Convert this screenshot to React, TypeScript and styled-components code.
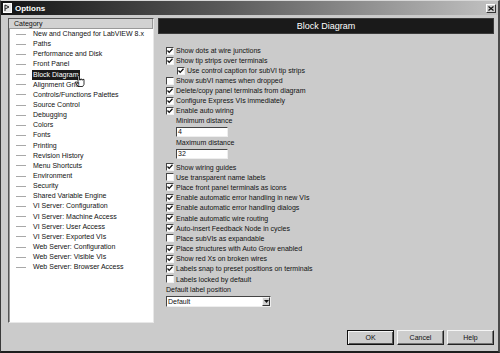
import React from 'react';
import styled, { createGlobalStyle } from 'styled-components';

const Global = createGlobalStyle`
  html, body { margin: 0; padding: 0; background: #cbcbcb; }
  body { font-family: "Liberation Sans", Arial, sans-serif; }
  * { box-sizing: border-box; }
`;

const Window = styled.div`
  width: 500px;
  height: 353px;
  background: #cbcbcb;
  border-top: 1px solid #d8d8d8;
  border-left: 1px solid #3a3a3a;
  border-right: 2px solid #4a4a4a;
  border-bottom: 2px solid #1e1e1e;
  display: flex;
  flex-direction: column;
  overflow: hidden;
`;

const TitleBar = styled.div`
  height: 14px;
  background: linear-gradient(to right, #141414 0%, #5a5a5a 45%, #c2c2c2 100%);
  display: flex;
  align-items: center;
  padding: 0 2px 0 2px;
  gap: 3px;
`;

const TitleText = styled.span`
  color: #fff;
  font-weight: bold;
  font-size: 8px;
  flex: 1;
`;

const CloseBtn = styled.div`
  width: 10px;
  height: 9px;
  background: #cfcfcf;
  border: 1px solid;
  border-color: #fff #333 #333 #fff;
  display: flex;
  align-items: center;
  justify-content: center;
`;

const Body = styled.div`
  flex: 1;
  display: flex;
  flex-direction: column;
  padding: 3px 4px 0 7px;
`;

const Main = styled.div`
  display: flex;
  gap: 4px;
  height: 305px;
`;

const ListBox = styled.div`
  width: 146px;
  height: 305px;
  background: #fff;
  border: 1px solid;
  border-color: #555 #e8e8e8 #e8e8e8 #555;
  box-shadow: inset 1px 1px 0 #9a9a9a;
  display: flex;
  flex-direction: column;
`;

const ListHeader = styled.div`
  height: 10px;
  background: #d2d2d2;
  border-bottom: 1px solid #999;
  border-right: 1px solid #999;
  font-size: 7px;
  line-height: 10px;
  padding-left: 5px;
  color: #111;
`;

const TreeItem = styled.div`
  height: 10.15px;
  display: flex;
  align-items: center;
  position: relative;
`;

const TreeLine = styled.span`
  width: 10px;
  height: 1px;
  background: #a8a8a8;
  margin-left: 7px;
  margin-right: 6px;
`;

const ItemLabel = styled.span<{ $selected?: boolean }>`
  font-size: 7px;
  line-height: 10px;
  padding: 0 1px;
  white-space: nowrap;
  color: ${p => (p.$selected ? '#fff' : '#111')};
  background: ${p => (p.$selected ? '#1a1a1a' : 'transparent')};
`;

const Cursor = styled.svg`
  position: absolute;
  left: 66px;
  top: 5px;
`;

const RightPanel = styled.div`
  flex: 1;
  display: flex;
  flex-direction: column;
`;

const PanelHeader = styled.div`
  height: 16px;
  background: #1a1a1a;
  border: 1px solid #3a3a3a;
  color: #fff;
  font-size: 9px;
  line-height: 14px;
  text-align: center;
`;

const Content = styled.div`
  padding: 11.7px 0 0 8px;
  display: flex;
  flex-direction: column;
`;

const CheckRow = styled.div<{ $indent?: boolean; $h?: number }>`
  height: ${p => p.$h ?? 10}px;
  display: flex;
  align-items: center;
  gap: 2px;
  padding-left: ${p => (p.$indent ? 11 : 0)}px;
  font-size: 7px;
  color: #111;
  white-space: nowrap;
`;

const Box = styled.span`
  width: 8px;
  height: 8px;
  background: #fff;
  border: 1px solid;
  border-color: #444 #f2f2f2 #f2f2f2 #444;
  display: flex;
  align-items: center;
  justify-content: center;
  flex-shrink: 0;
`;

const FieldLabel = styled.div<{ $indent?: number; $mt?: number }>`
  height: 10px;
  line-height: 10px;
  font-size: 7px;
  color: #111;
  padding-left: ${p => p.$indent ?? 0}px;
  margin-top: ${p => p.$mt ?? 0}px;
`;

const TextField = styled.div`
  width: 52px;
  height: 10px;
  margin: 1px 0 0 10px;
  background: #fff;
  border: 1px solid;
  border-color: #444 #eee #eee #444;
  font-size: 7px;
  line-height: 8px;
  padding-left: 1px;
  color: #111;
`;

const Group2 = styled.div`
  margin-top: 3px;
  display: flex;
  flex-direction: column;
`;

const Select = styled.div`
  width: 105px;
  height: 11px;
  margin-top: 1px;
  background: #fff;
  border: 1px solid;
  border-color: #444 #eee #eee #444;
  display: flex;
  align-items: center;
  font-size: 7px;
  color: #111;
`;

const SelectText = styled.span`
  flex: 1;
  padding-left: 1px;
`;

const SelectArrow = styled.span`
  width: 8px;
  height: 9px;
  background: #cfcfcf;
  border: 1px solid;
  border-color: #f5f5f5 #333 #333 #f5f5f5;
  display: flex;
  align-items: center;
  justify-content: center;
`;

const Footer = styled.div`
  margin-top: 7px;
  display: flex;
  justify-content: flex-end;
  gap: 3px;
  padding-right: 0px;
`;

const Button = styled.div<{ $default?: boolean }>`
  width: 47px;
  height: 15px;
  background: #cdcdcd;
  border: 1px solid;
  border-color: ${p => (p.$default ? '#111' : '#f5f5f5 #222 #222 #f5f5f5')};
  box-shadow: ${p =>
    p.$default ? 'inset 1px 1px 0 #f5f5f5, inset -1px -1px 0 #555' : 'inset -1px -1px 0 #777'};
  font-size: 7px;
  display: flex;
  align-items: center;
  justify-content: center;
  color: #111;
`;

const Check = () => (
  <svg width="6" height="6" viewBox="0 0 6 6">
    <polyline points="0.5,2.5 2.2,4.4 5.5,0.8" fill="none" stroke="#111" strokeWidth="1.3" />
  </svg>
);

const categories = [
  'New and Changed for LabVIEW 8.x',
  'Paths',
  'Performance and Disk',
  'Front Panel',
  'Block Diagram',
  'Alignment Grid',
  'Controls/Functions Palettes',
  'Source Control',
  'Debugging',
  'Colors',
  'Fonts',
  'Printing',
  'Revision History',
  'Menu Shortcuts',
  'Environment',
  'Security',
  'Shared Variable Engine',
  'VI Server: Configuration',
  'VI Server: Machine Access',
  'VI Server: User Access',
  'VI Server: Exported VIs',
  'Web Server: Configuration',
  'Web Server: Visible VIs',
  'Web Server: Browser Access',
];

const group1: [string, boolean, boolean?][] = [
  ['Show dots at wire junctions', true],
  ['Show tip strips over terminals', true],
  ['Use control caption for subVI tip strips', true, true],
  ['Show subVI names when dropped', false],
  ['Delete/copy panel terminals from diagram', true],
  ['Configure Express VIs immediately', true],
  ['Enable auto wiring', true],
];

const group2: [string, boolean][] = [
  ['Show wiring guides', true],
  ['Use transparent name labels', false],
  ['Place front panel terminals as icons', true],
  ['Enable automatic error handling in new VIs', true],
  ['Enable automatic error handling dialogs', true],
  ['Enable automatic wire routing', true],
  ['Auto-insert Feedback Node in cycles', true],
  ['Place subVIs as expandable', false],
  ['Place structures with Auto Grow enabled', true],
  ['Show red Xs on broken wires', true],
  ['Labels snap to preset positions on terminals', true],
  ['Labels locked by default', false],
];

export default function App() {
  return (
    <>
      <Global />
      <Window>
        <TitleBar>
          <svg width="9" height="10" viewBox="0 0 9 10">
            <rect x="0.5" y="0.5" width="8" height="9" fill="#e8e8e8" stroke="#fff" />
            <path d="M2 2 V8 M2 2 L6 4 L2 6" fill="none" stroke="#222" strokeWidth="1" />
          </svg>
          <TitleText>Options</TitleText>
          <CloseBtn>
            <svg width="6" height="5" viewBox="0 0 6 5">
              <path d="M0.5 0.5 L5.5 4.5 M5.5 0.5 L0.5 4.5" stroke="#111" strokeWidth="1.2" />
            </svg>
          </CloseBtn>
        </TitleBar>
        <Body>
          <Main>
            <ListBox>
              <ListHeader>Category</ListHeader>
              {categories.map(c => (
                <TreeItem key={c}>
                  <TreeLine />
                  <ItemLabel $selected={c === 'Block Diagram'}>{c}</ItemLabel>
                  {c === 'Block Diagram' && (
                    <Cursor width="10" height="12" viewBox="0 0 10 12">
                      <path
                        d="M3 0.5 h1.5 v4.5 h1 v-1 h1.3 v1 h1 v-0.6 h1.2 v5 l-1.3 2.1 h-4.5 l-2.6 -3.4 v-1.2 h1 l1.4 1.4 z"
                        fill="#fff"
                        stroke="#000"
                        strokeWidth="0.8"
                      />
                    </Cursor>
                  )}
                </TreeItem>
              ))}
            </ListBox>
            <RightPanel>
              <PanelHeader>Block Diagram</PanelHeader>
              <Content>
                {group1.map(([label, checked, indent]) => (
                  <CheckRow key={label} $indent={indent}>
                    <Box>{checked && <Check />}</Box>
                    {label}
                  </CheckRow>
                ))}
                <FieldLabel $indent={10} $mt={0.3}>Minimum distance</FieldLabel>
                <TextField>4</TextField>
                <FieldLabel $indent={10} $mt={1}>Maximum distance</FieldLabel>
                <TextField>32</TextField>
                <Group2>
                  {group2.map(([label, checked]) => (
                    <CheckRow key={label} $h={10.2}>
                      <Box>{checked && <Check />}</Box>
                      {label}
                    </CheckRow>
                  ))}
                </Group2>
                <FieldLabel $mt={0.6}>Default label position</FieldLabel>
                <Select>
                  <SelectText>Default</SelectText>
                  <SelectArrow>
                    <svg width="5" height="3" viewBox="0 0 5 3">
                      <path d="M0 0 H5 L2.5 3 Z" fill="#111" />
                    </svg>
                  </SelectArrow>
                </Select>
              </Content>
            </RightPanel>
          </Main>
          <Footer>
            <Button $default>OK</Button>
            <Button>Cancel</Button>
            <Button>Help</Button>
          </Footer>
        </Body>
      </Window>
    </>
  );
}
